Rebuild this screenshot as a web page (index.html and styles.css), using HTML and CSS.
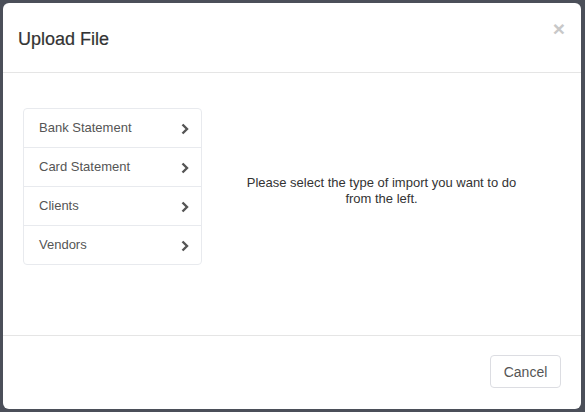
FILE: index.html
```html
<!DOCTYPE html>
<html>
<head>
<meta charset="utf-8">
<link rel="stylesheet" href="styles.css">
</head>
<body>
<div class="backdrop">
  <div class="modal">
    <div class="modal-header">
      <h4 class="modal-title">Upload File</h4>
      <span class="close">&times;</span>
    </div>
    <div class="modal-body">
      <div class="list-group">
        <div class="list-item"><span>Bank Statement</span><svg class="chev" width="8" height="12" viewBox="0 0 8 12"><path d="M1.5 1.5 L6 6 L1.5 10.5" fill="none" stroke="#555" stroke-width="2.4"/></svg></div>
        <div class="list-item"><span>Card Statement</span><svg class="chev" width="8" height="12" viewBox="0 0 8 12"><path d="M1.5 1.5 L6 6 L1.5 10.5" fill="none" stroke="#555" stroke-width="2.4"/></svg></div>
        <div class="list-item"><span>Clients</span><svg class="chev" width="8" height="12" viewBox="0 0 8 12"><path d="M1.5 1.5 L6 6 L1.5 10.5" fill="none" stroke="#555" stroke-width="2.4"/></svg></div>
        <div class="list-item"><span>Vendors</span><svg class="chev" width="8" height="12" viewBox="0 0 8 12"><path d="M1.5 1.5 L6 6 L1.5 10.5" fill="none" stroke="#555" stroke-width="2.4"/></svg></div>
      </div>
      <div class="message">Please select the type of import you want to do<br>from the left.</div>
    </div>
    <div class="modal-footer">
      <button class="btn">Cancel</button>
    </div>
  </div>
</div>
</body>
</html>
```

FILE: styles.css
```css
html, body {
  margin: 0;
  padding: 0;
  background: #4b4f59;
  font-family: "Liberation Sans", Arial, sans-serif;
}
.backdrop {
  width: 585px;
  height: 412px;
  padding: 3px 4px 3px 3px;
  box-sizing: border-box;
}
.modal {
  width: 578px;
  height: 406px;
  background: #fff;
  border-radius: 6px;
  display: flex;
  flex-direction: column;
  overflow: hidden;
}
.modal-header {
  height: 70px;
  border-bottom: 1px solid #e5e5e5;
  display: flex;
  align-items: flex-start;
  justify-content: space-between;
  padding: 0 16px 0 15px;
  box-sizing: border-box;
  flex: none;
}
.modal-title {
  margin: 25px 0 0;
  font-size: 18px;
  font-weight: normal;
  color: #333;
  line-height: 22px;
  -webkit-text-stroke: 0.2px #333;
}
.close {
  margin-top: 14px;
  font-size: 21px;
  font-weight: bold;
  color: #c8c8c8;
  line-height: 24px;
}
.modal-body {
  flex: 1;
  display: flex;
  padding: 35px 20px 0 20px;
  border-bottom: 1px solid #e5e5e5;
}
.list-group {
  width: 177px;
  flex: none;
  align-self: flex-start;
  border: 1px solid #e8eaee;
  border-radius: 4px;
}
.list-item {
  height: 38px;
  display: flex;
  align-items: center;
  justify-content: space-between;
  padding: 0 12px 0 15px;
  font-size: 13px;
  color: #555;
  border-top: 1px solid #e8eaee;
}
.list-item:first-child {
  border-top: none;
}
.list-item span {
  margin-top: -1px;
}
.chev {
  margin-top: 2px;
}
.message {
  flex: 1;
  text-align: center;
  font-size: 13px;
  line-height: 16px;
  color: #333;
  padding-top: 67px;
}
.modal-footer {
  height: 73px;
  flex: none;
  display: flex;
  justify-content: flex-end;
  align-items: flex-start;
  padding: 19px 20px 0 0;
  box-sizing: border-box;
}
.btn {
  width: 71px;
  height: 33px;
  border: 1px solid #dcdde2;
  border-radius: 4px;
  background: #fff;
  font-family: "Liberation Sans", Arial, sans-serif;
  font-size: 14px;
  color: #555;
  padding: 0;
}
```
